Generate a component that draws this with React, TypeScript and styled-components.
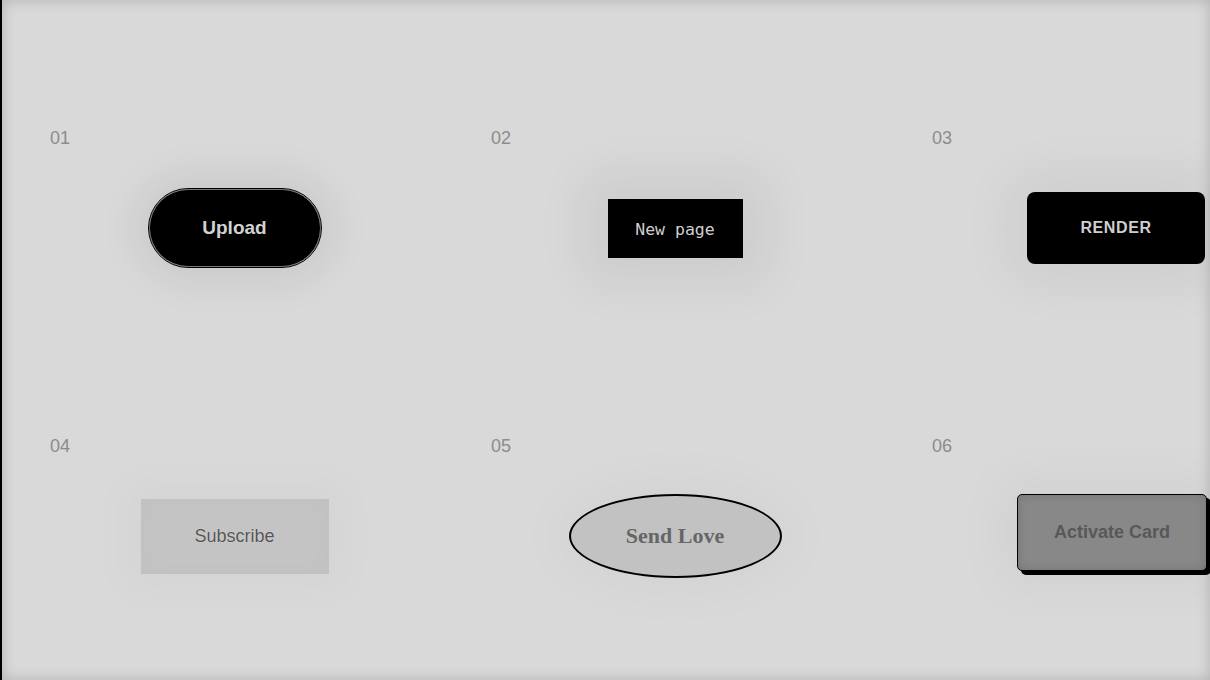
import React from "react";
import styled, { createGlobalStyle, css } from "styled-components";

const GlobalStyle = createGlobalStyle`
  html, body {
    margin: 0;
    padding: 0;
    background: #d9d9d9;
    font-family: "Liberation Sans", Arial, sans-serif;
  }
`;

const Page = styled.div`
  box-sizing: border-box;
  height: 680px;
  overflow: hidden;
  background: #d9d9d9;
  border-left: 2px solid #000;
  box-shadow: inset 0 0 14px rgba(0, 0, 0, 0.18);
  padding-top: 118px;
`;

const Grid = styled.div`
  display: grid;
  grid-template-columns: repeat(3, 441px);
  grid-auto-rows: 308px;
`;

const Cell = styled.div`
  display: flex;
  flex-direction: column;
  padding: 10px 25px 0 48px;
`;

const Label = styled.span`
  font-size: 18px;
  line-height: 20px;
  color: #8c8c8c;
`;

const Stage = styled.div`
  height: 160px;
  display: flex;
  align-items: center;
  justify-content: center;
`;

const base = css`
  box-sizing: border-box;
  display: flex;
  align-items: center;
  justify-content: center;
  flex-shrink: 0;
  cursor: pointer;
`;

const UploadButton = styled.button`
  ${base};
  width: 172px;
  height: 78px;
  margin-left: 1px;
  border-radius: 40px;
  background: #000;
  border: 1px solid #777;
  outline: 1px solid #000;
  color: #d2d2d2;
  font-family: "Liberation Sans", Arial, sans-serif;
  font-weight: 700;
  font-size: 19px;
  box-shadow: 0 0 40px 14px rgba(0, 0, 0, 0.07);
`;

const NewPageButton = styled.button`
  ${base};
  width: 135px;
  height: 59px;
  border: none;
  background: #000;
  color: #cfcfcf;
  font-family: "DejaVu Sans Mono", "Liberation Mono", monospace;
  font-size: 16.5px;
  padding: 2px 0 0;
  box-shadow: 0 0 50px 26px rgba(0, 0, 0, 0.06);
`;

const RenderButton = styled.button`
  ${base};
  width: 178px;
  height: 72px;
  border: none;
  border-radius: 8px;
  background: #000;
  color: #cfcfcf;
  font-family: "Liberation Sans", Arial, sans-serif;
  font-weight: 700;
  font-size: 16px;
  letter-spacing: 0.6px;
  text-transform: uppercase;
  box-shadow: 0 0 50px 20px rgba(0, 0, 0, 0.05);
`;

const SubscribeButton = styled.button`
  ${base};
  width: 188px;
  height: 75px;
  margin-left: 1px;
  border: none;
  background: #c4c4c4;
  color: #555;
  font-family: "Liberation Sans", Arial, sans-serif;
  font-size: 18px;
  text-shadow: 0 0 1px rgba(255, 255, 255, 0.6);
  box-shadow: inset 0 0 24px rgba(0, 0, 0, 0.02), 0 0 40px 20px rgba(0, 0, 0, 0.02);
`;

const LoveButton = styled.button`
  ${base};
  width: 213px;
  height: 84px;
  border: 2px solid #000;
  border-radius: 50%;
  background: #c2c2c2;
  color: #666;
  font-family: "Liberation Serif", "Times New Roman", serif;
  font-weight: 700;
  font-size: 22px;
  box-shadow: 0 0 50px 20px rgba(0, 0, 0, 0.025);
`;

const ActivateButton = styled.button`
  ${base};
  width: 190px;
  height: 77px;
  margin: -8px 0 0 -8px;
  border: 1px solid #000;
  border-radius: 5px;
  background: #888;
  color: #585858;
  font-family: "Liberation Sans", Arial, sans-serif;
  font-weight: 700;
  font-size: 18px;
  box-shadow: inset 0 0 10px rgba(0, 0, 0, 0.15), 4px 4px 0 #000,
    0 0 50px 20px rgba(0, 0, 0, 0.03);
`;

const items = [
  { id: "01", button: <UploadButton>Upload</UploadButton> },
  { id: "02", button: <NewPageButton>New page</NewPageButton> },
  { id: "03", button: <RenderButton>Render</RenderButton> },
  { id: "04", button: <SubscribeButton>Subscribe</SubscribeButton> },
  { id: "05", button: <LoveButton>Send Love</LoveButton> },
  { id: "06", button: <ActivateButton>Activate Card</ActivateButton> },
];

const App = () => {
  return (
    <>
      <GlobalStyle />
      <Page>
        <Grid>
          {items.map((item) => (
            <Cell key={item.id}>
              <Label>{item.id}</Label>
              <Stage>{item.button}</Stage>
            </Cell>
          ))}
        </Grid>
      </Page>
    </>
  );
};

export default App;
